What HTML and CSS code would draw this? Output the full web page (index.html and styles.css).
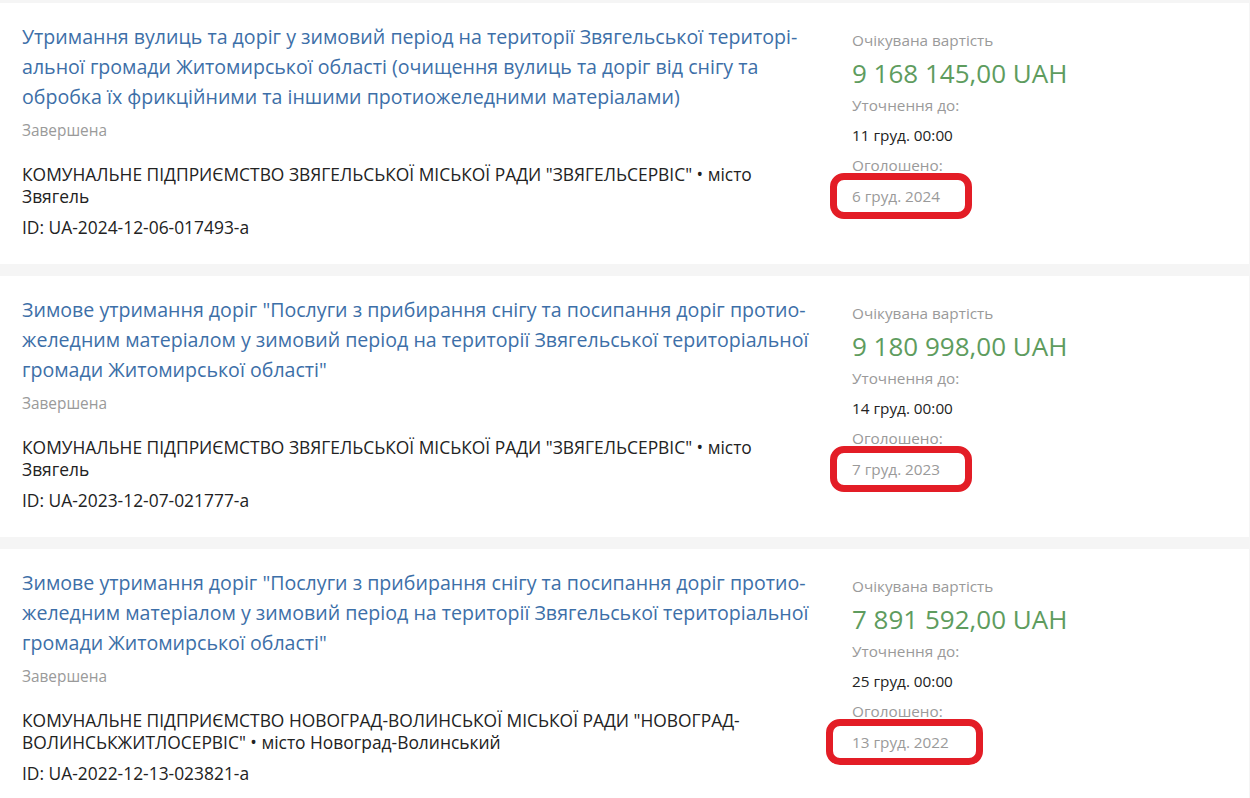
FILE: index.html
```html
<!DOCTYPE html>
<html lang="uk">
  <head>
    <meta charset="UTF-8">
    <meta name="viewport" content="width=device-width, initial-scale=1.0">
    <title>Тендери — прибирання снігу</title>
    <link rel="stylesheet" href="styles.css">
  </head>
  <body>
    <div class="tender-list">
      <div class="tender">
        <div class="tender-main">
          <a class="tender-title" href="#">Утримання вулиць та доріг у зимовий період на території Звягельської територі&shy;альної громади Житомирської області (очищення вулиць та доріг від снігу та обробка їх фрикційними та іншими протиожеледними матеріалами)</a>
          <div class="tender-status">Завершена</div>
          <div class="tender-org">КОМУНАЛЬНЕ ПІДПРИЄМСТВО ЗВЯГЕЛЬСЬКОЇ МІСЬКОЇ РАДИ "ЗВЯГЕЛЬСЕРВІС" • місто Звягель</div>
          <div class="tender-id">ID: UA-2024-12-06-017493-a</div>
        </div>
        <div class="tender-side">
          <div class="side-label">Очікувана вартість</div>
          <div class="side-price">9 168 145,00 UAH</div>
          <div class="side-label side-gap">Уточнення до:</div>
          <div class="side-value">11 груд. 00:00</div>
          <div class="side-label">Оголошено:</div>
          <div class="side-date"><span class="marked">6 груд. 2024</span></div>
        </div>
      </div>

      <div class="tender">
        <div class="tender-main">
          <a class="tender-title" href="#">Зимове утримання доріг "Послуги з прибирання снігу та посипання доріг протио&shy;желедним матеріалом у зимовий період на території Звягельської територіальної громади Житомирської області"</a>
          <div class="tender-status">Завершена</div>
          <div class="tender-org">КОМУНАЛЬНЕ ПІДПРИЄМСТВО ЗВЯГЕЛЬСЬКОЇ МІСЬКОЇ РАДИ "ЗВЯГЕЛЬСЕРВІС" • місто Звягель</div>
          <div class="tender-id">ID: UA-2023-12-07-021777-a</div>
        </div>
        <div class="tender-side">
          <div class="side-label">Очікувана вартість</div>
          <div class="side-price">9 180 998,00 UAH</div>
          <div class="side-label side-gap">Уточнення до:</div>
          <div class="side-value">14 груд. 00:00</div>
          <div class="side-label">Оголошено:</div>
          <div class="side-date"><span class="marked">7 груд. 2023</span></div>
        </div>
      </div>

      <div class="tender">
        <div class="tender-main">
          <a class="tender-title" href="#">Зимове утримання доріг "Послуги з прибирання снігу та посипання доріг протио&shy;желедним матеріалом у зимовий період на території Звягельської територіальної громади Житомирської області"</a>
          <div class="tender-status">Завершена</div>
          <div class="tender-org">КОМУНАЛЬНЕ ПІДПРИЄМСТВО НОВОГРАД-ВОЛИНСЬКОЇ МІСЬКОЇ РАДИ "НОВОГРАД-ВОЛИНСЬКЖИТЛОСЕРВІС" • місто Новоград-Волинський</div>
          <div class="tender-id">ID: UA-2022-12-13-023821-a</div>
        </div>
        <div class="tender-side">
          <div class="side-label">Очікувана вартість</div>
          <div class="side-price">7 891 592,00 UAH</div>
          <div class="side-label side-gap">Уточнення до:</div>
          <div class="side-value">25 груд. 00:00</div>
          <div class="side-label">Оголошено:</div>
          <div class="side-date"><span class="marked wide">13 груд. 2022</span></div>
        </div>
      </div>
    </div>
  </body>
</html>
```

FILE: styles.css
```css
:root {
  --link-color: #3d6fa8;
  --price-color: #5e9c5e;
  --muted-color: #9a9a9a;
  --text-color: #222222;
  --band-color: #f5f5f5;
  --mark-color: #e31d26;
}

body {
  font-family: 'Open Sans', 'Noto Sans', sans-serif;
  background-color: var(--band-color);
  color: var(--text-color);
  margin: 0;
  padding: 0;
}

.tender-list {
  display: flex;
  flex-direction: column;
  gap: 12px;
  padding-top: 3px;
  margin-right: 1px;
}

.tender {
  display: flex;
  background: #ffffff;
  padding: 19px 22px 26px;
}

.tender-main {
  flex: 0 0 792px;
  margin-right: 38px;
}

.tender-title {
  display: block;
  font-size: 19.6px;
  line-height: 30px;
  color: var(--link-color);
  text-decoration: none;
  hyphens: manual;
}

.tender-status {
  margin-top: 9px;
  font-size: 15.4px;
  line-height: 20px;
  color: var(--muted-color);
}

.tender-org {
  margin-top: 22px;
  font-size: 17.4px;
  line-height: 22px;
}

.tender-id {
  margin-top: 9px;
  font-size: 17.4px;
  line-height: 22px;
}

.tender-side {
  padding-top: 8px;
}

.side-label {
  font-size: 15.3px;
  line-height: 20px;
  color: var(--muted-color);
}

.side-price {
  margin-top: 6px;
  font-size: 26px;
  line-height: 34px;
  color: var(--price-color);
}

.side-gap {
  margin-top: 5px;
}

.side-value {
  margin: 10px 0;
  font-size: 15.3px;
  line-height: 20px;
}

.side-date {
  margin-top: 11px;
  font-size: 15.3px;
  line-height: 20px;
  color: var(--muted-color);
}

.marked {
  display: inline-block;
  margin: -13px 0 -13px -22px;
  padding: 6px 25px 6px 15px;
  border: 7px solid var(--mark-color);
  border-radius: 14px;
}

.marked.wide {
  margin-left: -26px;
  padding-left: 19px;
  padding-right: 27px;
}
```
